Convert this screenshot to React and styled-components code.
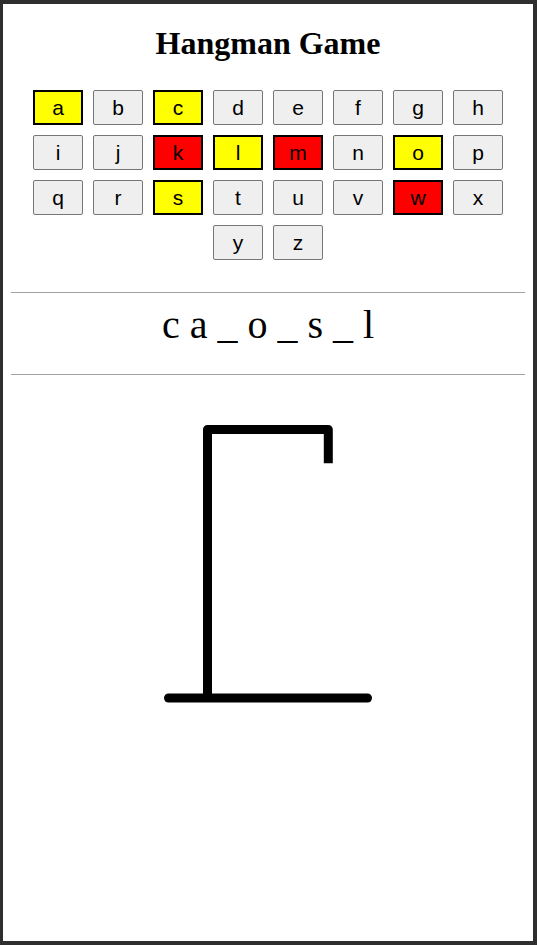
import React from "react";
import styled, { createGlobalStyle } from "styled-components";

const letters = "abcdefghijklmnopqrstuvwxyz".split("");
const hits = ["a", "c", "l", "o", "s"];
const misses = ["k", "m", "w"];
const word = ["c", "a", "_", "o", "_", "s", "_", "l"];

const GlobalStyle = createGlobalStyle`
  html, body {
    margin: 0;
    background: #2e2e2e;
  }
  body {
    padding: 4px 4px 4px 3px;
  }
`;

const App = () => {
  return (
    <>
      <GlobalStyle />
      <Frame>
        <Title>Hangman Game</Title>
        <Keyboard>
          {letters.map((l) => {
            let state = hits.includes(l) ? "hit" : misses.includes(l) ? "miss" : "idle";
            return (
              <Key key={l} $state={state}>
                {l}
              </Key>
            );
          })}
        </Keyboard>
        <Divider $top={27} />
        <Word>{word.join(" ")}</Word>
        <Divider $top={26} />
        <Gallows width="240" height="310" viewBox="0 0 240 310">
          <path
            d="M59.5 298 V29.5 H180.3 V63.3"
            fill="none"
            stroke="#000"
            strokeWidth="9"
            strokeLinejoin="round"
          />
          <line
            x1="20.5"
            y1="298"
            x2="219.5"
            y2="298"
            stroke="#000"
            strokeWidth="9"
            strokeLinecap="round"
          />
        </Gallows>
      </Frame>
    </>
  );
};

const Frame = styled.div`
  background: #ffffff;
  height: 937px;
  box-sizing: border-box;
  padding: 0 8px;
  display: flow-root;
  overflow: hidden;
`;

const Title = styled.h1`
  font-family: "Liberation Serif", "Times New Roman", serif;
  font-size: 32px;
  font-weight: bold;
  text-align: center;
  margin: 21.4px 0 0;
  color: #000;
`;

const Keyboard = styled.div`
  display: flex;
  flex-wrap: wrap;
  justify-content: center;
  width: 480px;
  margin: 23px auto 0;
`;

const Key = styled.button`
  width: 50px;
  height: 35px;
  margin: 5px;
  padding: 0;
  box-sizing: border-box;
  font-family: "Liberation Sans", Arial, sans-serif;
  font-size: 21px;
  color: #000;
  background: ${(p) =>
    p.$state === "hit" ? "#ffff00" : p.$state === "miss" ? "#ff0000" : "#efefef"};
  border: ${(p) => (p.$state === "idle" ? "1px solid #767676" : "2px solid #000")};
  border-radius: ${(p) => (p.$state === "idle" ? "2px" : "0")};
`;

const Divider = styled.hr`
  margin: ${(p) => p.$top}px 0 0;
  border: none;
  border-top: 1px solid #a0a0a0;
  height: 0;
`;

const Word = styled.div`
  font-family: "Liberation Serif", "Times New Roman", serif;
  font-size: 40px;
  text-align: center;
  margin-top: 8px;
  color: #000;
`;

const Gallows = styled.svg`
  display: block;
  margin: 25px auto 0;
`;

export default App;
